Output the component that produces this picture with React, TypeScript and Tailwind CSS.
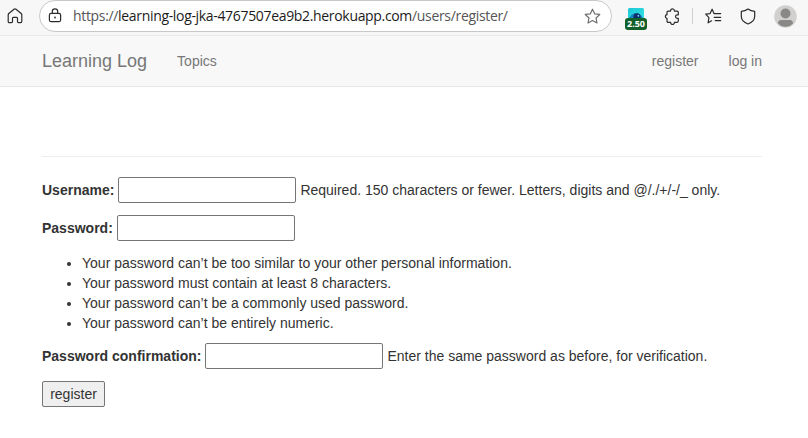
import React from "react";

const iconProps = {
  fill: "none",
  stroke: "#2b2b2b",
  strokeWidth: 1.2,
  strokeLinejoin: "round" as const,
  strokeLinecap: "round" as const,
};

function HomeIcon() {
  return (
    <svg className="ml-[7px] h-4 w-4 shrink-0" viewBox="0 0 16 16" {...iconProps}>
      <path d="M1.2 6.9c0-.6.2-1 .6-1.4L7 1.3c.6-.5 1.4-.5 2 0l5.2 4.2c.4.4.6.8.6 1.4v6.7c0 .6-.5 1.1-1.1 1.1h-2.1c-.6 0-1.1-.5-1.1-1.1V10.3c0-.5-.4-.9-.9-.9H6.4c-.5 0-.9.4-.9.9v3.3c0 .6-.5 1.1-1.1 1.1H2.3c-.6 0-1.1-.5-1.1-1.1z" />
    </svg>
  );
}

function LockIcon() {
  return (
    <svg className="ml-[7px] h-4 w-4 shrink-0" viewBox="0 0 16 16" {...iconProps}>
      <rect x="2.4" y="5.3" width="11.2" height="8.4" rx="1.8" />
      <path d="M5.3 5.3V3.600a2.700 2.700 0 0 1 5.400 0v1.700" />
      <circle cx="8" cy="9.500" r=".9" fill="#2b2b2b" stroke="none" />
    </svg>
  );
}

function StarIcon() {
  return (
    <svg className="mr-[10px] h-[17px] w-[17px] shrink-0" viewBox="0 0 17 17" {...iconProps} stroke="#707070">
      <path d="M8.500 1.200l2.150 4.650 5.100.6-3.750 3.500 1 5.050-4.500-2.500L4 15l1-5.050-3.750-3.500 5.100-.6z" />
    </svg>
  );
}

function ExtensionBadge() {
  return (
    <div className="mt-1.5 ml-[13px] flex h-[22px] w-[22px] shrink-0 flex-col items-center">
      <svg className="h-[10px] w-4 shrink-0" viewBox="0 0 16 10">
        <defs>
          <linearGradient id="tile" x1="0" y1="0" x2="1" y2="1">
            <stop offset="0" stopColor="#1bc5d4" />
            <stop offset="1" stopColor="#35e4e2" />
          </linearGradient>
        </defs>
        <path d="M0 10V1.500Q0 0 1.500 0h13Q16 0 16 1.500V10z" fill="url(#tile)" />
        <path d="M1 10C4 4.500 11 2.500 15 10z" fill="#1689c5" />
        <circle cx="9" cy="8.800" r="3.600" fill="#102c69" />
        <circle cx="10.300" cy="7.700" r="1" fill="#58ccec" />
      </svg>
      <div className="flex h-3 w-[22px] shrink-0 items-center justify-center rounded-[3px] bg-[#12602a] font-['Open_Sans',sans-serif] text-[9px] leading-3 font-bold text-white">
        2.50
      </div>
    </div>
  );
}

function PuzzleIcon() {
  return (
    <svg className="ml-[17px] h-[17px] w-4 shrink-0" viewBox="0 0 16 17" {...iconProps}>
      <path d="M4.200 3.100h2.400V2.700a1.900 1.900 0 0 1 3.800 0v.4h2.700c.7 0 1.200.5 1.200 1.200v2.500h-1a1.800 1.800 0 0 0 0 3.600h1v2.700c0 .7-.5 1.200-1.200 1.200h-2.700v.3a1.900 1.900 0 0 1-3.800 0v-.3H4.200c-.7 0-1.200-.5-1.200-1.200v-2.700h-.2a1.900 1.900 0 0 1 0-3.700H3V4.300c0-.7.500-1.200 1.200-1.200z" />
    </svg>
  );
}

function FavoritesIcon() {
  return (
    <svg className="ml-[12px] h-[17px] w-[17px] shrink-0" viewBox="0 0 17 17" {...iconProps}>
      <path d="M9.500 5.600L9 5.400 7.100 1.200 5.100 5.600.7 6.200l3.200 3.400-.8 5.200 3.500-2" />
      <path d="M9.500 5.600h6.200M9.200 9.300h6.500M10.200 12.600h5.500" />
    </svg>
  );
}

function ShieldIcon() {
  return (
    <svg className="ml-[18px] h-[17px] w-4 shrink-0" viewBox="0 0 16 17" {...iconProps}>
      <path d="M8 1c2 1.500 4.200 2.200 6.700 2.300v5c0 3.500-2.300 6.100-6.700 7.700-4.400-1.600-6.700-4.200-6.700-7.700v-5C3.800 3.200 6 2.500 8 1z" />
    </svg>
  );
}

function Avatar() {
  return (
    <svg className="ml-[18px] h-[23px] w-[23px] shrink-0" viewBox="0 0 23 23">
      <circle cx="11.500" cy="11.500" r="11.300" fill="#d2d0ce" />
      <circle cx="11.500" cy="8.500" r="5" fill="#8a8886" />
      <path d="M3.900 18.200c.2-2.300 1.600-3.200 3.200-3.200h8.800c1.600 0 3 .9 3.200 3.200a10 10 0 0 1-15.200 0z" fill="#8a8886" />
    </svg>
  );
}

function BrowserBar() {
  return (
    <div className="h-9 border-b border-[#e9e9e9] bg-[#f7f7f7]">
      <div className="flex h-8 items-center">
        <HomeIcon />
        <div className="ml-4 flex h-8 w-[573px] shrink-0 items-center rounded-full border border-[#c8c8c8] bg-white">
          <LockIcon />
          <div className="ml-[10px] flex-1 whitespace-nowrap font-['Open_Sans',sans-serif] text-[14px] tracking-[-0.33px] text-[#1b1b1b]">
            <span className="text-[#555]">https://</span>learning-log-jka-4767507ea9b2.herokuapp.com
            <span className="text-[#555]">/users/register/</span>
          </div>
          <StarIcon />
        </div>
        <ExtensionBadge />
        <PuzzleIcon />
        <div className="ml-[12px] h-4 w-px bg-[#d0d0d0]" />
        <FavoritesIcon />
        <ShieldIcon />
        <Avatar />
      </div>
    </div>
  );
}

const rules = [
  "Your password can’t be too similar to your other personal information.",
  "Your password must contain at least 8 characters.",
  "Your password can’t be a commonly used password.",
  "Your password can’t be entirely numeric.",
];

function Field({ label, type, help }: { label: string; type: string; help?: string }) {
  return (
    <label className="flex h-[26px] items-center gap-1 whitespace-nowrap">
      <span className="font-bold">{label}</span>
      <input type={type} className="h-[26px] w-[178px] shrink-0 rounded-[2px] border border-[#767676] bg-white px-0.5" />
      {help && <span>{help}</span>}
    </label>
  );
}

export default function App() {
  return (
    <div className="h-[438px] overflow-hidden bg-white font-['Liberation_Sans',Arial,sans-serif] text-[14px] leading-5 text-[#333]">
      <BrowserBar />
      <nav className="flex h-[51px] items-center border-b border-[#e7e7e7] bg-[#f8f8f8] pr-[46px] pl-[42px] text-[#777]">
        <a className="text-[18px]">Learning Log</a>
        <a className="ml-[30px]">Topics</a>
        <a className="ml-auto">register</a>
        <a className="ml-[30px]">log in</a>
      </nav>
      <main className="pt-[69px] pr-[46px] pl-[42px]">
        <div className="h-px bg-[#eee]" />
        <form className="mt-5" onSubmit={(e) => e.preventDefault()}>
          <div className="flex flex-col gap-3">
            <Field label="Username:" type="text" help="Required. 150 characters or fewer. Letters, digits and @/./+/-/_ only." />
            <Field label="Password:" type="password" />
          </div>
          <ul className="mt-3 mb-2.5 list-disc pl-10">
            {rules.map((rule) => (
              <li key={rule}>{rule}</li>
            ))}
          </ul>
          <Field label="Password confirmation:" type="password" help="Enter the same password as before, for verification." />
          <button className="mt-3 h-[26px] w-[63px] rounded-[2px] border border-[#767676] bg-[#efefef]">register</button>
        </form>
      </main>
    </div>
  );
}
